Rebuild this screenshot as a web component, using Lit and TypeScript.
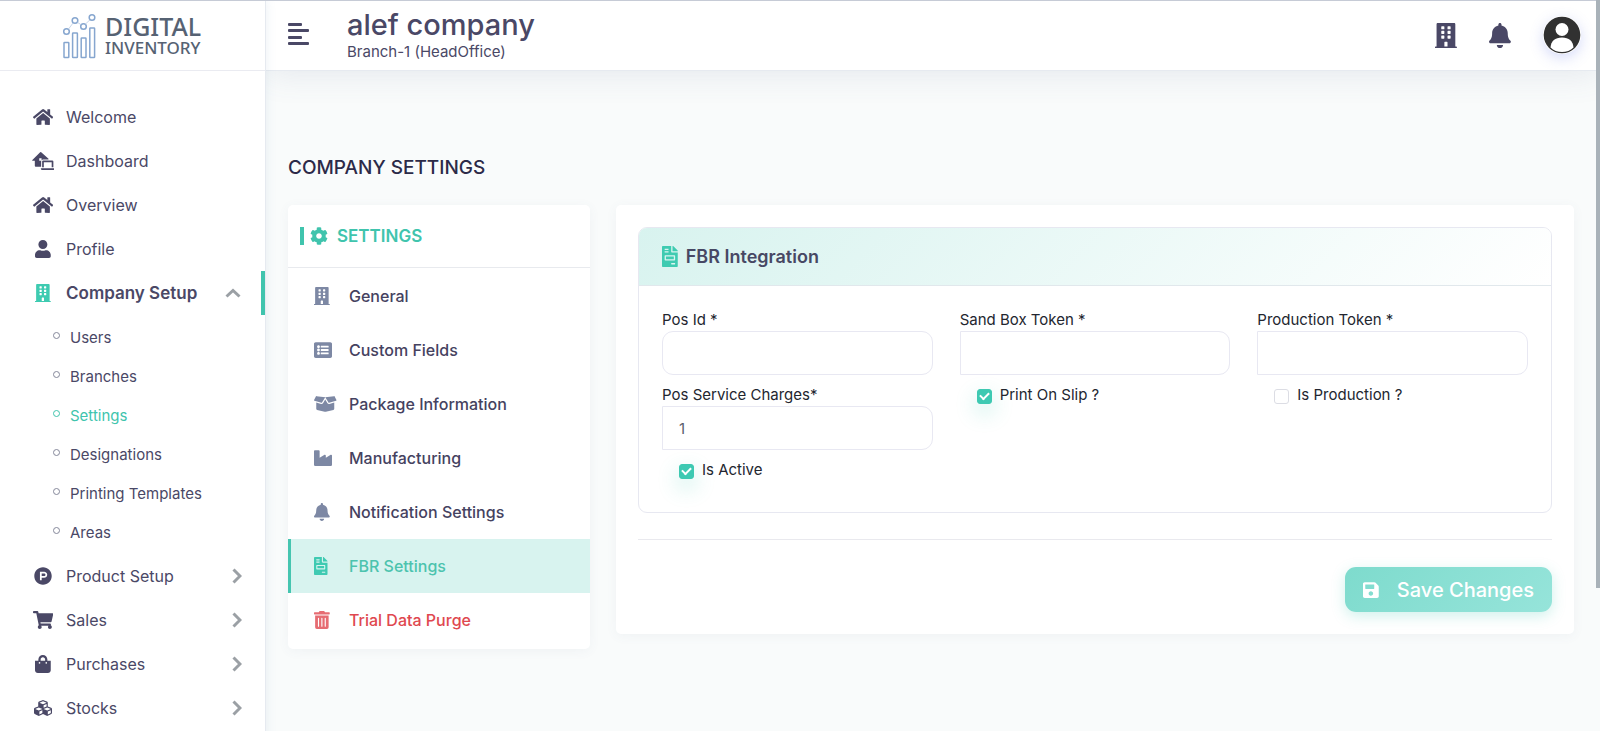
import { LitElement, html, css, svg, nothing } from "lit";
import { customElement, property, state } from "lit/decorators.js";
import { classMap } from "lit/directives/class-map.js";

const pane = (x: number, y: number) => `M${x + 12} ${y}h40a12 12 0 0 1 12 12v40a12 12 0 0 1-12 12h-40a12 12 0 0 1-12-12v-40a12 12 0 0 1 12-12z`;

const ICONS: Record<string, [number, string]> = {
  home: [576, "M280.37 148.26L96 300.11V464a16 16 0 0 0 16 16l112.06-.29a16 16 0 0 0 15.92-16V368a16 16 0 0 1 16-16h64a16 16 0 0 1 16 16v95.64a16 16 0 0 0 16 16.05L464 480a16 16 0 0 0 16-16V300L295.67 148.26a12.19 12.19 0 0 0-15.3 0zM571.6 251.47L488 182.56V44.05a12 12 0 0 0-12-12h-56a12 12 0 0 0-12 12v72.61L318.47 43a48 48 0 0 0-61 0L4.34 251.47a12 12 0 0 0-1.6 16.9l25.5 31A12 12 0 0 0 45.15 301l235.22-193.74a12.19 12.19 0 0 1 15.3 0L530.9 301a12 12 0 0 0 16.9-1.6l25.5-31a12 12 0 0 0-1.7-16.93z"],
  laptopHouse: [640, "M232 8a24 24 0 0 1 30 0L470 190a16 16 0 0 1-8 22H316a56 56 0 0 0-56 56v150H104a24 24 0 0 1-24-24V252H20a16 16 0 0 1-10-28zM206 180v70h66v-70zM320 240h256a32 32 0 0 1 32 32v164h-48V288H336v148h-48V272a32 32 0 0 1 32-32zM252 460h388v14a38 38 0 0 1-38 38H290a38 38 0 0 1-38-38z"],
  user: [448, "M224 256c70.7 0 128-57.3 128-128S294.7 0 224 0 96 57.3 96 128s57.3 128 128 128zm89.6 32h-16.7c-22.2 10.2-46.9 16-72.9 16s-50.6-5.8-72.9-16h-16.7C60.2 288 0 348.2 0 422.4V464c0 26.5 21.5 48 48 48h352c26.5 0 48-21.5 48-48v-41.6c0-74.2-60.2-134.4-134.4-134.4z"],
  building: [448, "M436 480h-20V24c0-13.255-10.745-24-24-24H56C42.745 0 32 10.745 32 24v456H12c-6.627 0-12 5.373-12 12v20h448v-20c0-6.627-5.373-12-12-12z" + [76, 172, 268].map(y => pane(128, y - 12) + pane(256, y - 12)).join("") + "M204 384h40a12 12 0 0 1 12 12v84h-64v-84a12 12 0 0 1 12-12z"],
  product: [512, "M326.3 218.8c0 20.5-16.7 37.2-37.2 37.2h-70.3v-74.4h70.3c20.5 0 37.2 16.7 37.2 37.2zM504 256c0 137-111 248-248 248S8 393 8 256 119 8 256 8s248 111 248 248zm-128.1-37.2c0-47.9-38.9-86.8-86.8-86.8H169.2v248h49.6v-74.4h70.3c47.9 0 86.8-38.9 86.8-86.8z"],
  cart: [576, "M528.12 301.319l47.273-208C578.806 78.301 567.391 64 551.99 64H159.208l-9.166-44.81C147.758 8.021 137.93 0 126.529 0H24C10.745 0 0 10.745 0 24v16c0 13.255 10.745 24 24 24h69.883l70.248 343.435C147.325 417.1 136 435.222 136 456c0 30.928 25.072 56 56 56s56-25.072 56-56c0-15.674-6.447-29.835-16.824-40h209.647C430.447 426.165 424 440.326 424 456c0 30.928 25.072 56 56 56s56-25.072 56-56c0-22.172-12.888-41.332-31.579-50.405l5.517-24.276c3.413-15.018-8.002-29.319-23.403-29.319H218.117l-6.545-32h293.145c11.206 0 20.92-7.754 23.403-18.681z"],
  bag: [448, "M352 160v-32C352 57.42 294.579 0 224 0 153.42 0 96 57.42 96 128v32H0v272c0 44.183 35.817 80 80 80h288c44.183 0 80-35.817 80-80V160h-96zm-192-32c0-35.29 28.71-64 64-64s64 28.71 64 64v32H160v-32zm160 120c-13.255 0-24-10.745-24-24s10.745-24 24-24 24 10.745 24 24-10.745 24-24 24zm-192 0c-13.255 0-24-10.745-24-24s10.745-24 24-24 24 10.745 24 24-10.745 24-24 24z"],
  cubes: [512, "M488.6 250.2L392 214V105.5c0-15-9.3-28.4-23.4-33.7l-100-37.5c-8.1-3.1-17.1-3.1-25.3 0l-100 37.5c-14.1 5.3-23.4 18.7-23.4 33.7V214l-96.6 36.2C9.3 255.5 0 268.9 0 283.9V394c0 13.6 7.7 26.1 19.9 32.2l100 50c10.1 5.1 22.1 5.1 32.2 0l103.9-52 103.9 52c10.1 5.1 22.1 5.1 32.2 0l100-50c12.2-6.1 19.9-18.6 19.9-32.2V283.9c0-15-9.3-28.4-23.4-33.7zM358 214.8l-85 31.9v-68.2l85-37v73.3zM154 104.1l102-38.2 102 38.2v.6l-102 41.4-102-41.4v-.6zm84 291.1l-85 42.5v-79.1l85-38.8v75.4zm0-112l-102 41.4-102-41.4v-.6l102-38.2 102 38.2v.6zm240 112l-85 42.5v-79.1l85-38.8v75.4zm0-112l-102 41.4-102-41.4v-.6l102-38.2 102 38.2v.6z"],
  cog: [512, "M487.4 315.7l-42.6-24.6c4.3-23.2 4.3-47 0-70.2l42.6-24.6c4.9-2.8 7.1-8.6 5.5-14-11.1-35.6-30-67.8-54.7-94.6-3.8-4.1-10-5.1-14.8-2.3L380.8 110c-17.9-15.4-38.5-27.3-60.8-35.1V25.8c0-5.6-3.9-10.5-9.4-11.7-36.7-8.2-74.3-7.8-109.2 0-5.5 1.2-9.4 6.1-9.4 11.7V75c-22.2 7.9-42.8 19.8-60.8 35.1L88.7 85.5c-4.9-2.8-11-1.9-14.8 2.3-24.7 26.7-43.6 58.9-54.7 94.6-1.7 5.4.6 11.2 5.5 14L67.3 221c-4.3 23.2-4.3 47 0 70.2l-42.6 24.6c-4.9 2.8-7.1 8.6-5.5 14 11.1 35.6 30 67.8 54.7 94.6 3.8 4.1 10 5.1 14.8 2.3l42.6-24.6c17.9 15.4 38.5 27.3 60.8 35.1v49.2c0 5.6 3.9 10.5 9.4 11.7 36.7 8.2 74.3 7.8 109.2 0 5.5-1.2 9.4-6.1 9.4-11.7v-49.2c22.2-7.9 42.8-19.8 60.8-35.1l42.6 24.6c4.9 2.8 11 1.9 14.8-2.3 24.7-26.7 43.6-58.9 54.7-94.6 1.5-5.5-.7-11.3-5.6-14.1zM256 336c-44.1 0-80-35.9-80-80s35.9-80 80-80 80 35.9 80 80-35.9 80-80 80z"],
  list: [512, "M464 480H48c-26.51 0-48-21.49-48-48V80c0-26.51 21.49-48 48-48h416c26.51 0 48 21.49 48 48v352c0 26.51-21.49 48-48 48zM128 120c-22.091 0-40 17.909-40 40s17.909 40 40 40 40-17.909 40-40-17.909-40-40-40zm0 96c-22.091 0-40 17.909-40 40s17.909 40 40 40 40-17.909 40-40-17.909-40-40-40zm0 96c-22.091 0-40 17.909-40 40s17.909 40 40 40 40-17.909 40-40-17.909-40-40-40z" + [132, 228, 324].map(y => `M204 ${y}h200a12 12 0 0 1 12 12v32a12 12 0 0 1-12 12H204a12 12 0 0 1-12-12v-32a12 12 0 0 1 12-12z`).join("")],
  box: [640, "M425.7 256c-16.9 0-32.8-9-41.4-23.4L320 126l-64.2 106.6c-8.7 14.5-24.6 23.5-41.5 23.5-4.5 0-9-.6-13.3-1.9L64 215v178c0 14.7 10 27.5 24.2 31l216.2 54.1c10.2 2.5 20.9 2.5 31 0L551.8 424c14.2-3.6 24.2-16.4 24.2-31V215l-137 39.1c-4.3 1.3-8.8 1.9-13.3 1.9zm212.6-112.2L586.8 41c-3.1-6.2-9.8-9.8-16.7-8.9L320 64l91.7 152.1c3.8 6.3 11.4 9.3 18.5 7.3l197.9-56.5c9.9-2.9 14.7-13.9 10.2-23.1zM53.2 41L1.7 143.8c-4.6 9.2.3 20.2 10.1 23l197.9 56.5c7.1 2 14.7-1 18.5-7.3L320 64 69.8 32.1c-6.9-.8-13.5 2.7-16.6 8.9z"],
  industry: [512, "M475.115 163.781L336 252.309v-68.28c0-18.916-20.931-30.399-36.885-20.248L160 252.309V56c0-13.255-10.745-24-24-24H24C10.745 32 0 42.745 0 56v400c0 13.255 10.745 24 24 24h464c13.255 0 24-10.745 24-24V184.029c0-18.917-20.931-30.399-36.885-20.248z"],
  bell: [448, "M224 512c35.32 0 63.97-28.65 63.97-64H160.03c0 35.35 28.65 64 63.97 64zm215.39-149.71c-19.32-20.76-55.47-51.99-55.47-154.29 0-77.7-54.48-139.9-127.94-155.16V32c0-17.67-14.32-32-31.98-32s-31.98 14.33-31.98 32v20.84C118.56 68.1 64.08 130.3 64.08 208c0 102.3-36.15 133.53-55.47 154.29-6 6.45-8.66 14.16-8.61 21.71.11 16.4 12.98 32 32.1 32h383.8c19.12 0 32-15.6 32.1-32 .05-7.55-2.61-15.27-8.61-21.71z"],
  invoice: [384, "M288 256H96v64h192v-64zm89-151L279.1 7c-4.5-4.5-10.6-7-17-7H256v128h128v-6.1c0-6.3-2.5-12.4-7-16.9zm-153 31V0H24C10.7 0 0 10.7 0 24v464c0 13.3 10.7 24 24 24h336c13.3 0 24-10.7 24-24V160H248c-13.2 0-24-10.8-24-24zM64 72c0-4.42 3.58-8 8-8h80c4.42 0 8 3.58 8 8v16c0 4.42-3.58 8-8 8H72c-4.42 0-8-3.58-8-8V72zm0 64c0-4.42 3.58-8 8-8h80c4.42 0 8 3.58 8 8v16c0 4.42-3.58 8-8 8H72c-4.42 0-8-3.58-8-8v-16zm256 304c0 4.42-3.58 8-8 8h-80c-4.42 0-8-3.58-8-8v-16c0-4.42 3.58-8 8-8h80c4.42 0 8 3.58 8 8v16zm0-200v96c0 8.84-7.16 16-16 16H80c-8.84 0-16-7.16-16-16v-96c0-8.84 7.16-16 16-16h224c8.84 0 16 7.16 16 16z"],
  trash: [448, "M32 464a48 48 0 0 0 48 48h288a48 48 0 0 0 48-48V128H32zm272-256a16 16 0 0 1 32 0v224a16 16 0 0 1-32 0zm-96 0a16 16 0 0 1 32 0v224a16 16 0 0 1-32 0zm-96 0a16 16 0 0 1 32 0v224a16 16 0 0 1-32 0zM432 32H312l-9.4-18.7A24 24 0 0 0 281.1 0H166.8a23.72 23.72 0 0 0-21.4 13.3L136 32H16A16 16 0 0 0 0 48v32a16 16 0 0 0 16 16h416a16 16 0 0 0 16-16V48a16 16 0 0 0-16-16z"],
  save: [448, "M433.941 129.941l-83.882-83.882A48 48 0 0 0 316.118 32H48C21.49 32 0 53.49 0 80v352c0 26.51 21.49 48 48 48h352c26.51 0 48-21.49 48-48V163.882a48 48 0 0 0-14.059-33.941zM224 416c-35.346 0-64-28.654-64-64 0-35.346 28.654-64 64-64s64 28.654 64 64c0 35.346-28.654 64-64 64zm96-304.52V212c0 6.627-5.373 12-12 12H76c-6.627 0-12-5.373-12-12V108c0-6.627 5.373-12 12-12h228.52c3.183 0 6.235 1.264 8.485 3.515l3.48 3.48A11.996 11.996 0 0 1 320 111.48z"],
};

const icon = (name: string, em = 18) => {
  const [w, d] = ICONS[name];
  return html`<svg aria-hidden="true" width=${(w / 512) * em} height=${em} viewBox="0 0 ${w} 512" fill="currentColor" fill-rule="evenodd">${svg`<path d=${d}></path>`}</svg>`;
};

interface NavItem { icon: string; label: string; children?: string[]; group?: boolean; open?: boolean; }

const NAV: NavItem[] = [
  { icon: "home", label: "Welcome" },
  { icon: "laptopHouse", label: "Dashboard" },
  { icon: "home", label: "Overview" },
  { icon: "user", label: "Profile" },
  { icon: "building", label: "Company Setup", group: true, open: true, children: ["Users", "Branches", "Settings", "Designations", "Printing Templates", "Areas"] },
  { icon: "product", label: "Product Setup", group: true },
  { icon: "cart", label: "Sales", group: true },
  { icon: "bag", label: "Purchases", group: true },
  { icon: "cubes", label: "Stocks", group: true },
];

const TABS: [string, string][] = [
  ["building", "General"],
  ["list", "Custom Fields"],
  ["box", "Package Information"],
  ["industry", "Manufacturing"],
  ["bell", "Notification Settings"],
  ["invoice", "FBR Settings"],
  ["trash", "Trial Data Purge"],
];

const base = css`
  * { box-sizing: border-box; }
  h1, h2, h3, p, ul { margin: 0; padding: 0; }
  ul { list-style: none; }
  a { color: inherit; text-decoration: none; }
  svg { display: block; flex: none; }
  button { font: inherit; color: inherit; border: 0; background: none; padding: 0; cursor: pointer; }
`;

@customElement("side-nav")
export class SideNav extends LitElement {
  static styles = [base, css`
    :host { display: block; background: #fff; border-right: 1px solid #e6eaf0; color: #4a4866; }
    .brand { height: 71px; display: flex; align-items: center; justify-content: center; padding-top: 2px; border-bottom: 1px solid #eaebf1; }
    .menu { padding: 24px 0; }
    .link { display: flex; align-items: center; height: 44px; padding: 0 23px 0 32px; font-size: 16px; }
    .glyph { width: 22px; margin-right: 12px; display: flex; justify-content: center; }
    .label { flex: 1; }
    .open { font-size: 17px; font-weight: 600; border-right: 4px solid #40c4ad; padding-right: 20px; }
    .open .glyph { color: #3ecbb1; }
    .chevron { color: #9ba0a5; }
    .sub { padding: 3px 0 2px; }
    .child { display: flex; align-items: center; gap: 10px; height: 39px; padding-left: 53px; font-size: 15px; }
    .dot { width: 7px; height: 7px; border: 1px solid #85889a; border-radius: 50%; margin-bottom: 4px; }
    .current { color: #40c4ad; }
    .current .dot { border-color: #40c4ad; }
  `];

  render() {
    return html`
      <div class="brand">
        <svg width="143" height="58" viewBox="61 7 143 58" role="img" aria-label="Digital Inventory">
          <g fill="none" stroke="#86a6cf" stroke-width="1.5">
            <rect x="64" y="42.500" width="4.800" height="15" rx=".6"></rect>
            <rect x="72.600" y="33" width="4.800" height="24.500" rx=".6"></rect>
            <rect x="81.200" y="38" width="4.800" height="19.500" rx=".6"></rect>
            <rect x="89.800" y="28" width="4.800" height="29.500" rx=".6"></rect>
            <circle cx="66.500" cy="31.500" r="2.800"></circle>
            <circle cx="75" cy="20.500" r="2.800"></circle>
            <circle cx="83.500" cy="26.500" r="2.800"></circle>
            <circle cx="92" cy="17.500" r="2.800"></circle>
            <path stroke="#b9cae2" stroke-width=".8" d="M68.300 29.300l4.900-6.500M77.300 22.200l4 2.700M85.300 24.200l4.900-4.600"></path>
          </g>
          <g fill="#566273" font-family="Noto Sans, sans-serif" font-weight="500">
            <text x="105" y="36" font-size="25">DIGITAL</text>
            <text x="105" y="54" font-size="17">INVENTORY</text>
          </g>
        </svg>
      </div>
      <nav aria-label="Main">
        <ul class="menu">
          ${NAV.map(n => html`<li>
            <a href="#" class=${classMap({ link: true, open: !!n.open })}>
              <span class="glyph">${icon(n.icon)}</span>
              <span class="label">${n.label}</span>
              ${n.group ? html`<svg class="chevron" width=${n.open ? 16 : 10} height=${n.open ? 10 : 16} viewBox=${n.open ? "0 0 16 10" : "0 0 10 16"} fill="none" stroke="currentColor" stroke-width="3"><path d=${n.open ? "M1.500 8.500L8 2.500l6.500 6" : "M1.500 1.500L8 8l-6.500 6.500"}></path></svg>` : nothing}
            </a>
            ${n.children ? html`<ul class="sub">${n.children.map(c => html`<li>
              <a href="#" class=${classMap({ child: true, current: c === "Settings" })}><span class="dot"></span>${c}</a></li>`)}</ul>` : nothing}
          </li>`)}
        </ul>
      </nav>`;
  }
}

@customElement("top-bar")
export class TopBar extends LitElement {
  static styles = [base, css`
    :host { display: flex; align-items: center; height: 71px; padding: 0 19px 0 22px; background: #fff; border-bottom: 1px solid #e6eaf0; box-shadow: 0 4px 32px rgba(80, 100, 140, 0.12); color: #4a4866; }
    .toggle { padding-bottom: 2px; }
    .company { flex: 1; margin-left: 38px; padding-bottom: 1px; }
    .name { font-size: 29px; line-height: 34px; font-weight: 500; }
    .branch { font-size: 15px; line-height: 20px; }
    .actions { display: flex; align-items: center; gap: 32px; }
    .avatar { border-radius: 50%; box-shadow: 0 4px 14px rgba(90, 110, 230, 0.25); }
  `];

  render() {
    return html`
      <button class="toggle" aria-label="Toggle menu">
        <svg width="21" height="22" viewBox="0 0 21 22" fill="currentColor"><rect width="14" height="3" rx="1"></rect><rect y="6" width="21" height="3" rx="1"></rect><rect y="13" width="14" height="3" rx="1"></rect><rect y="19" width="21" height="3" rx="1"></rect></svg>
      </button>
      <div class="company">
        <h1 class="name">alef company</h1>
        <p class="branch">Branch-1 (HeadOffice)</p>
      </div>
      <div class="actions">
        <button aria-label="Branches">${icon("building", 25)}</button>
        <button aria-label="Notifications">${icon("bell", 25)}</button>
        <button class="avatar" aria-label="Account">
          <svg width="38" height="38" viewBox="0 0 38 38"><circle cx="19" cy="19" r="19" fill="#fff"></circle><circle cx="19" cy="19" r="18.300" fill="#313131"></circle><circle cx="19" cy="13.500" r="6.500" fill="#fff"></circle><path d="M7.500 31.500C8 25 12 21.500 19 21.500s11 3.500 11.500 10C27.500 34.500 23.500 36 19 36s-8.500-1.500-11.500-4.500z" fill="#fff"></path></svg>
        </button>
      </div>`;
  }
}

@customElement("settings-menu")
export class SettingsMenu extends LitElement {
  @property() active = "";

  static styles = [base, css`
    :host { display: block; background: #fff; border-radius: 5px; box-shadow: 0 2px 12px rgba(80, 110, 140, 0.06); color: #45425f; overflow: hidden; }
    .head { display: flex; align-items: center; height: 63px; padding: 0 12px; border-bottom: 1px solid #e8eaee; color: #40c4ad; font-size: 17px; font-weight: 600; }
    .bar { width: 4px; height: 18px; background: currentColor; margin-right: 6px; }
    .title { font: inherit; margin-left: 9px; }
    .list { padding: 1px 0 2px; }
    .tab { display: flex; align-items: center; height: 54px; padding-left: 23px; border-left: 3px solid transparent; font-size: 16px; font-weight: 500; }
    .glyph { width: 35px; color: #7d88a4; }
    .active { background: #d8f3ef; border-color: #45c5b0; color: #4cc3ae; }
    .active .glyph { color: #3fcab2; }
    .danger { color: #e0484f; }
    .danger .glyph { color: #e66c72; }
  `];

  render() {
    return html`
      <div class="head"><span class="bar"></span>${icon("cog")}<h2 class="title">SETTINGS</h2></div>
      <ul class="list">
        ${TABS.map(([ic, label]) => html`<li><a href="#" class=${classMap({ tab: true, active: label === this.active, danger: ic === "trash" })}><span class="glyph">${icon(ic)}</span>${label}</a></li>`)}
      </ul>`;
  }
}

@customElement("fbr-form")
export class FbrForm extends LitElement {
  @state() private charges = "1";

  static styles = [base, css`
    :host { display: block; background: #fff; border-radius: 5px; box-shadow: 0 2px 12px rgba(80, 110, 140, 0.06); padding: 22px; color: #23262f; }
    .card { border: 1px solid #e7e8f1; border-radius: 9px; overflow: hidden; }
    .head { display: flex; align-items: center; gap: 8px; height: 58px; padding: 0 23px; border-bottom: 1px solid #e1e8ec; background: linear-gradient(135deg, #d8f3ef, #fff); font-size: 18px; color: #474864; }
    .head svg { color: #3ecbb1; }
    .title { font: inherit; font-weight: 600; }
    .grid { display: grid; grid-template-columns: repeat(3, 1fr); align-items: start; gap: 8px 27px; padding: 22px 23px 31px; font-size: 15px; line-height: 23px; }
    .field { display: flex; flex-direction: column; }
    .text { width: 100%; height: 44px; padding: 0 16px; border: 1px solid #e8e8f2; border-radius: 0 11px 11px 0; background: #fff; font: inherit; color: #5c5f6c; outline: none; }
    .round { border-radius: 11px; }
    .check { display: flex; align-items: center; gap: 8px; padding-left: 17px; }
    .box { appearance: none; width: 15px; height: 15px; margin: 3px 0 0; border: 1px solid #dcdde4; border-radius: 3px; background: #fff; display: grid; place-items: center; }
    .box:checked { background: #3ec9b2; border-color: #3ec9b2; box-shadow: 0 8px 20px 2px rgba(62, 201, 178, 0.22); }
    .box:checked::after { content: ""; width: 7px; height: 4px; border: solid #fff; border-width: 0 0 2px 2px; transform: translateY(-1px) rotate(-45deg); }
    .foot { display: flex; justify-content: flex-end; margin-top: 26px; padding-top: 27px; border-top: 1px solid #e9e9ee; }
    .save { display: flex; align-items: center; gap: 18px; height: 45px; padding: 0 18px; border-radius: 11px; color: #fff; font-size: 20px; font-weight: 500; background: linear-gradient(135deg, #7edbcd, #96e4da); box-shadow: 0 4px 14px rgba(62, 201, 178, 0.25); }
  `];

  private field(id: string, label: string, round = false, value = "") {
    return html`<div class="field"><label for=${id}>${label}</label><input id=${id} class=${classMap({ text: true, round })} type="text" .value=${value} /></div>`;
  }

  private check(id: string, label: string, on: boolean) {
    return html`<div class="check"><input id=${id} class="box" type="checkbox" .checked=${on} /><label for=${id}>${label}</label></div>`;
  }

  render() {
    return html`
      <div class="card">
        <div class="head">${icon("invoice", 21)}<h3 class="title">FBR Integration</h3></div>
        <div class="grid">
          ${this.field("pos-id", "Pos Id *", true)}
          ${this.field("sandbox", "Sand Box Token *")}
          ${this.field("production", "Production Token *")}
          ${this.field("charges", "Pos Service Charges*", false, this.charges)}
          ${this.check("print", "Print On Slip ?", true)}
          ${this.check("is-production", "Is Production ?", false)}
          ${this.check("active", "Is Active", true)}
        </div>
      </div>
      <div class="foot"><button class="save" type="button">${icon("save")}Save Changes</button></div>`;
  }
}

@customElement("app-root")
export class AppRoot extends LitElement {
  static styles = [base, css`
    :host { display: grid; grid-template-columns: 266px minmax(0, 1fr); min-height: 100vh; position: relative; background: #f9fbfb; font-family: Inter, "Open Sans", sans-serif; }
    .edge { position: absolute; top: 0; left: 0; right: 0; height: 1px; background: #c6cbd6; z-index: 2; }
    .thumb { position: absolute; top: 0; right: 0; width: 4px; height: calc(80vh + 3px); background: #a9b2b9; z-index: 2; }
    side-nav { z-index: 1; box-shadow: 0 0 10px rgba(90, 130, 170, 0.12); }
    .content { padding: 83px 26px 32px 22px; }
    .title { font-size: 19px; line-height: 28px; font-weight: 500; color: #2c2a48; margin-bottom: 23px; }
    .columns { display: grid; grid-template-columns: repeat(4, minmax(0, 1fr)); gap: 26px; align-items: start; }
    fbr-form { grid-column: span 3; }
  `];

  render() {
    return html`
      <div class="edge"></div>
      <div class="thumb"></div>
      <side-nav></side-nav>
      <div>
        <top-bar></top-bar>
        <main class="content">
          <h2 class="title">COMPANY SETTINGS</h2>
          <div class="columns">
            <settings-menu active="FBR Settings"></settings-menu>
            <fbr-form></fbr-form>
          </div>
        </main>
      </div>`;
  }
}
